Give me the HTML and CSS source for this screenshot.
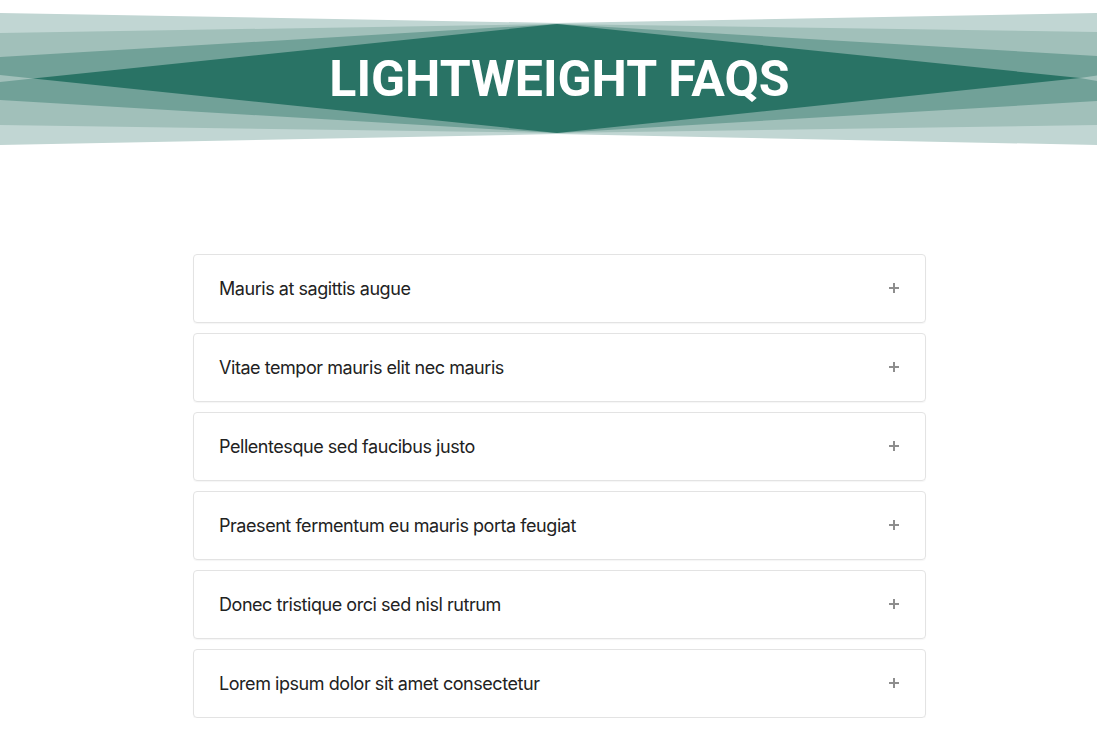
FILE: index.html
```html
<!DOCTYPE html>
<html lang="en">
<head>
<meta charset="utf-8">
<title>Lightweight FAQs</title>
<link rel="stylesheet" href="styles.css">
</head>
<body>
<header class="banner">
  <svg class="banner-art" viewBox="0 0 1097 160" preserveAspectRatio="none" aria-hidden="true">
    <polygon class="l1" points="0,13 557,23 1097,13 1097,145 557,134 0,145"/>
    <polygon class="l2" points="0,33 557,24 1097,32 1097,125 557,133 0,125"/>
    <polygon class="l3" points="0,57 557,24 1097,56 1097,75.5 1080,78 1097,81 1097,101 557,133 0,100 0,82 33,78.5 0,75"/>
    <polygon class="l4" points="33,78.5 557,24 1080,78 557,133"/>
  </svg>
  <h1 class="banner-title">LIGHTWEIGHT FAQS</h1>
</header>
<main class="faq">
  <div class="faq-item"><span class="faq-q">Mauris at sagittis augue</span><svg class="plus" viewBox="0 0 10 10"><path d="M5 0V10M0 5H10"/></svg></div>
  <div class="faq-item"><span class="faq-q">Vitae tempor mauris elit nec mauris</span><svg class="plus" viewBox="0 0 10 10"><path d="M5 0V10M0 5H10"/></svg></div>
  <div class="faq-item"><span class="faq-q">Pellentesque sed faucibus justo</span><svg class="plus" viewBox="0 0 10 10"><path d="M5 0V10M0 5H10"/></svg></div>
  <div class="faq-item"><span class="faq-q">Praesent fermentum eu mauris porta feugiat</span><svg class="plus" viewBox="0 0 10 10"><path d="M5 0V10M0 5H10"/></svg></div>
  <div class="faq-item"><span class="faq-q">Donec tristique orci sed nisl rutrum</span><svg class="plus" viewBox="0 0 10 10"><path d="M5 0V10M0 5H10"/></svg></div>
  <div class="faq-item"><span class="faq-q">Lorem ipsum dolor sit amet consectetur</span><svg class="plus" viewBox="0 0 10 10"><path d="M5 0V10M0 5H10"/></svg></div>
</main>
</body>
</html>
```
FILE: styles.css
```css
html, body {
  margin: 0;
  padding: 0;
  background: #ffffff;
}
body {
  font-family: Inter, "Noto Sans", sans-serif;
  color: #222222;
}
.banner {
  position: relative;
  height: 160px;
  display: flex;
  align-items: center;
  justify-content: center;
  padding-left: 22px;
  box-sizing: border-box;
}
.banner-art {
  position: absolute;
  left: 0;
  top: 0;
  width: 100%;
  height: 160px;
}
.l1 { fill: #c1d6d3; }
.l2 { fill: #a1c0ba; }
.l3 { fill: #71a198; }
.l4 { fill: #297365; }
.banner-title {
  position: relative;
  margin: -3px 0 0 0;
  font-family: Roboto, "Liberation Sans", sans-serif;
  font-weight: 700;
  font-size: 50px;
  letter-spacing: 0;
  color: #ffffff;
  line-height: 1;
}
.faq {
  margin: 94px 0 0 22px;
  display: flex;
  flex-direction: column;
  align-items: center;
  gap: 10px;
}
.faq-item {
  width: 733px;
  height: 69px;
  box-sizing: border-box;
  border: 1px solid #e3e3e3;
  border-radius: 4px;
  box-shadow: 0 1px 1px rgba(0, 0, 0, 0.04);
  display: flex;
  align-items: center;
  justify-content: space-between;
  padding: 0 26px 0 25px;
}
.faq-q {
  font-size: 18px;
  letter-spacing: -0.45px;
  color: #222222;
}
.plus {
  width: 10px;
  height: 10px;
  margin-top: -2px;
}
.plus path {
  stroke: #8e8e8e;
  stroke-width: 2;
  fill: none;
}
```
